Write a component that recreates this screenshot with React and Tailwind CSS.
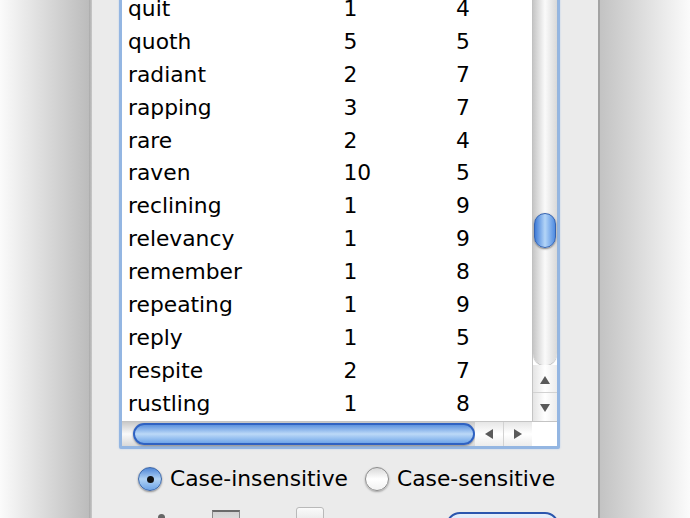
import React from 'react';

const rows = [
  ['quit', '1', '4'],
  ['quoth', '5', '5'],
  ['radiant', '2', '7'],
  ['rapping', '3', '7'],
  ['rare', '2', '4'],
  ['raven', '10', '5'],
  ['reclining', '1', '9'],
  ['relevancy', '1', '9'],
  ['remember', '1', '8'],
  ['repeating', '1', '9'],
  ['reply', '1', '5'],
  ['respite', '2', '7'],
  ['rustling', '1', '8'],
];

const Arrow = ({ dir }) => {
  const pts = {
    up: '5,1 10,9 0,9',
    down: '0,1 10,1 5,9',
    left: '1,5 9,0 9,10',
    right: '1,0 9,5 1,10',
  }[dir];
  return (
    <svg width="10" height="10" viewBox="0 0 10 10">
      <polygon points={pts} fill="#5a5a5a" />
    </svg>
  );
};

const App = () => {
  return (
    <div className="flex h-[518px] w-[690px] overflow-hidden font-['DejaVu_Sans',sans-serif] text-[21.8px] text-black">
      {/* desktop shadow, left */}
      <div className="w-[89px] shrink-0 bg-gradient-to-r from-[#fbfbfb] to-[#bcbcbc]" />
      <div className="w-[3px] shrink-0 bg-gradient-to-r from-[#a9a9a9] to-[#c9c9c9]" />

      {/* window body */}
      <div className="flex h-[518px] w-[506px] shrink-0 flex-col overflow-hidden bg-[#ebebeb] pl-[27px]">
        {/* list with focus ring */}
        <div className="-mt-[10px] flex h-[459px] w-[441px] shrink-0 flex-col rounded-[2px] border-[3px] border-[#94b6e2] bg-white shadow-[0_0_2px_#b7cdec]">
          <div className="flex h-[428px]">
            <div className="w-[410px] overflow-hidden">
              {rows.map(([word, count, len]) => (
                <div key={word} className="flex h-[32.9px] leading-[32.9px]">
                  <span className="w-[221.5px] pl-[6px]">{word}</span>
                  <span className="w-[112.5px]">{count}</span>
                  <span>{len}</span>
                </div>
              ))}
            </div>

            {/* vertical scroller */}
            <div className="flex w-[25px] flex-col border-l border-[#c4c4c4]">
              <div className="flex h-[372px] flex-col rounded-b-[12px] bg-gradient-to-r from-[#c6c6c6] via-[#fafafa] to-[#d9d9d9] shadow-[0_1px_1px_#b0b0b0]">
                <div className="mx-auto mt-[220px] h-[35px] w-[22px] rounded-full border border-[#3563b0] bg-gradient-to-r from-[#3f7bd6] via-[#b4d5f7] to-[#4f8be0] shadow-[0_1px_2px_#7a7a7a]" />
              </div>
              <div className="flex h-[28px] items-center justify-center border-b border-[#d2d2d2] bg-gradient-to-r from-[#e4e4e4] via-white to-[#ececec] pt-[2px]">
                <Arrow dir="up" />
              </div>
              <div className="flex h-[28px] items-center justify-center bg-gradient-to-r from-[#e4e4e4] via-white to-[#ececec] pt-[2px]">
                <Arrow dir="down" />
              </div>
            </div>
          </div>

          {/* horizontal scroller */}
          <div className="flex h-[25px] border-t border-[#c4c4c4]">
            <div className="flex w-[353px] items-center bg-gradient-to-b from-[#c9c9c9] via-[#fafafa] to-[#d8d8d8] pl-[11px]">
              <div className="h-[22px] w-[342px] rounded-full border-2 border-[#2f62c2] bg-gradient-to-b from-[#5e93de] via-[#bcd9f7] to-[#6fa5e8] shadow-[0_1px_2px_#8a8a8a]" />
            </div>
            <div className="flex w-[28.5px] items-center justify-center border-r border-[#d2d2d2] bg-gradient-to-b from-[#e6e6e6] via-white to-[#ececec]">
              <Arrow dir="left" />
            </div>
            <div className="flex w-[28.5px] items-center justify-center bg-gradient-to-b from-[#e6e6e6] via-white to-[#ececec]">
              <Arrow dir="right" />
            </div>
            <div className="flex-1 bg-white" />
          </div>
        </div>

        {/* case options */}
        <div className="mt-[18px] flex h-[24px] shrink-0 items-center leading-[24px]">
          <div className="ml-[19px] flex h-[24px] w-[24px] items-center justify-center rounded-full border border-[#3f68a8] bg-gradient-to-b from-[#4f86d6] via-[#b0d2f4] to-[#6ea4e6] shadow-[0_1px_2px_#8a8a8a]">
            <div className="h-[7px] w-[7px] rounded-full bg-[#111]" />
          </div>
          <span className="ml-[8px]">Case-insensitive</span>
          <div className="ml-[17px] h-[24px] w-[24px] rounded-full border border-[#8c8c8c] bg-gradient-to-b from-[#d9d9d9] via-white to-[#f2f2f2] shadow-[0_1px_2px_#a0a0a0]" />
          <span className="ml-[8px]">Case-sensitive</span>
        </div>

        {/* bottom controls, cut off */}
        <div className="mt-[15px] flex shrink-0 items-start">
          <div className="ml-[39px] mt-[8px] h-[5px] w-[7px] rounded-t-full bg-[#666]" />
          <div className="ml-[47px] mt-[4px] h-[20px] w-[28px] border-x border-t-2 border-[#8a8a8a] border-t-[#6a6a6a] bg-gradient-to-b from-[#d2d2d2] to-[#ededed]" />
          <div className="ml-[56px] mt-[1px] h-[20px] w-[28px] rounded-t-[3px] border border-[#b9b9b9] bg-gradient-to-b from-[#fafafa] to-[#e2e2e2]" />
          <div className="ml-[122px] mt-[6px] h-[26px] w-[113px] rounded-t-[14px] border-2 border-[#2b55ad] bg-gradient-to-b from-[#e6effa] to-[#c3d9f3]" />
        </div>
      </div>

      {/* desktop shadow, right */}
      <div className="w-[2px] shrink-0 bg-[#a3a3a3]" />
      <div className="flex-1 bg-gradient-to-r from-[#c3c3c3] to-[#fbfbfb]" />
    </div>
  );
};

export default App;
